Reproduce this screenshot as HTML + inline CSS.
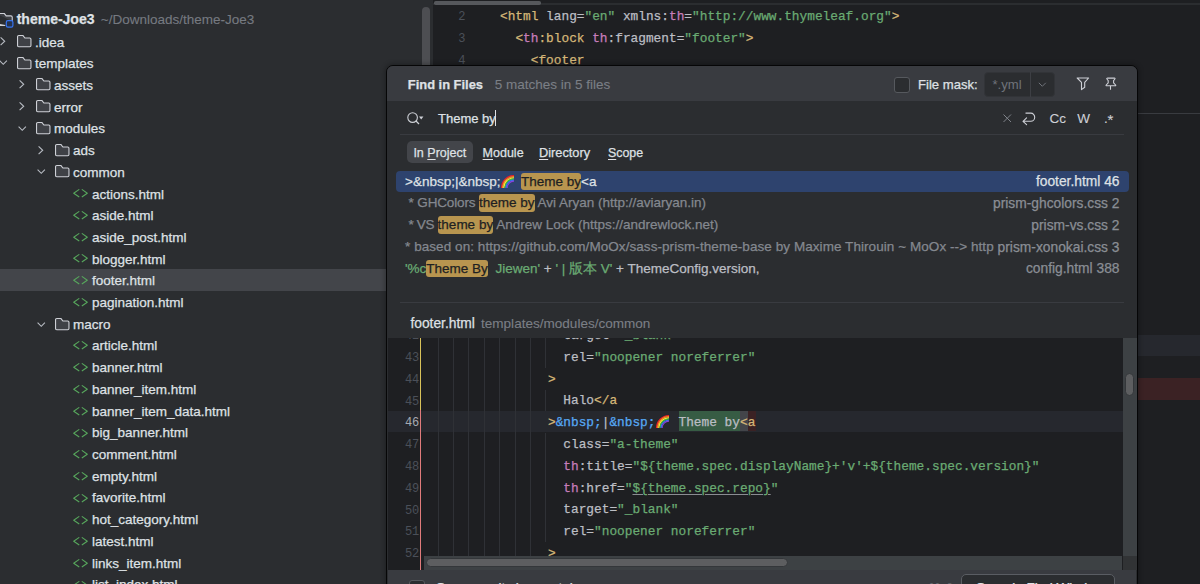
<!DOCTYPE html><html><head><meta charset="utf-8"><style>
*{margin:0;padding:0;box-sizing:border-box}
html,body{width:1200px;height:584px;overflow:hidden;background:#2b2d30}
body{position:relative;font-family:"Liberation Sans",sans-serif;color:#dfe1e5;font-size:13.5px}
.abs{position:absolute;white-space:pre}
.t{position:absolute;white-space:pre;line-height:22px;height:22px;-webkit-text-stroke:0.25px currentColor}
.tag{color:#d5b778}.attr{color:#bcbec4}.val{color:#6aab73}.ns{color:#c77dbb}.ent{color:#56a8f5}.txt{color:#bcbec4}
.ln{color:#4b5059;-webkit-text-stroke:0}
.hl{display:inline-block;height:17.6px;line-height:17.6px;background:#b8954f;color:#1e1f22;border-radius:3px}
svg{position:absolute;overflow:visible}
u{text-decoration:underline;text-underline-offset:1.5px;text-decoration-thickness:1px}
.val u{text-decoration-color:#8a8d92}
</style></head><body>
<div class="abs" style="left:0.00px;top:0.00px;width:433.00px;height:584.00px;background:#2b2d30;"></div>
<div class="abs" style="left:0.00px;top:269.12px;width:433.00px;height:22.00px;background:#43454a;"></div>
<div class="abs" style="left:422.00px;top:7.00px;width:8.00px;height:80.00px;background:#4d4e52;border-radius:4px"></div>
<svg style="left:0;top:13px" width="14" height="16" viewBox="0 0 14 16"><path d="M-1.5 1.9 Q-1.5 0.55 -0.2 0.55 H4.4 L6.2 2.9 H10.9 Q12.25 2.9 12.25 4.25 V8.2 M5.2 12.5 H-0.2 Q-1.5 12.5 -1.5 11.2 Z" fill="#3d3f44" stroke="#ced0d6" stroke-width="1.1"/><rect x="6.3" y="7.6" width="6.6" height="6.6" rx="1.6" fill="#25324d" stroke="#3574f0" stroke-width="1.2"/></svg>
<div class="t " style="left:16.70px;top:7.75px;font-size:14px;font-family:'Liberation Sans',sans-serif;font-weight:bold;color:#dfe1e5">theme-Joe3</div>
<div class="t " style="left:100.80px;top:8.82px;font-size:13.5px;font-family:'Liberation Sans',sans-serif;color:#767a81;-webkit-text-stroke:0.1px #767a81">~/Downloads/theme-Joe3</div>
<svg style="left:0.45px;top:36.85px" width="6" height="9" viewBox="0 0 6 9"><path d="M0.6 0.3 L4.7 4.25 L0.6 8.2" fill="none" stroke="#b8bcc3" stroke-width="1.1"/></svg>
<svg style="left:16.70px;top:34.80px" width="15" height="13" viewBox="0 0 15 13"><path d="M0.55 1.8 Q0.55 0.55 1.8 0.55 H6.0 L7.9 3.0 H12.7 Q13.95 3.0 13.95 4.25 V10.45 Q13.95 11.7 12.7 11.7 H1.8 Q0.55 11.7 0.55 10.45 Z" fill="#3f4146" stroke="#ced0d6" stroke-width="1.1"/></svg>
<div class="t " style="left:34.90px;top:31.57px;font-size:13.5px;font-family:'Liberation Sans',sans-serif;">.idea</div>
<svg style="left:-1.30px;top:60.38px" width="9" height="6" viewBox="0 0 9 6"><path d="M0.6 0.6 L4.25 4.3 L7.9 0.6" fill="none" stroke="#b8bcc3" stroke-width="1.1"/></svg>
<svg style="left:16.70px;top:56.58px" width="15" height="13" viewBox="0 0 15 13"><path d="M0.55 1.8 Q0.55 0.55 1.8 0.55 H6.0 L7.9 3.0 H12.7 Q13.95 3.0 13.95 4.25 V10.45 Q13.95 11.7 12.7 11.7 H1.8 Q0.55 11.7 0.55 10.45 Z" fill="#3f4146" stroke="#ced0d6" stroke-width="1.1"/></svg>
<div class="t " style="left:34.90px;top:53.28px;font-size:13.5px;font-family:'Liberation Sans',sans-serif;">templates</div>
<svg style="left:19.45px;top:80.40px" width="6" height="9" viewBox="0 0 6 9"><path d="M0.6 0.3 L4.7 4.25 L0.6 8.2" fill="none" stroke="#b8bcc3" stroke-width="1.1"/></svg>
<svg style="left:35.70px;top:78.35px" width="15" height="13" viewBox="0 0 15 13"><path d="M0.55 1.8 Q0.55 0.55 1.8 0.55 H6.0 L7.9 3.0 H12.7 Q13.95 3.0 13.95 4.25 V10.45 Q13.95 11.7 12.7 11.7 H1.8 Q0.55 11.7 0.55 10.45 Z" fill="#3f4146" stroke="#ced0d6" stroke-width="1.1"/></svg>
<div class="t " style="left:53.90px;top:74.99px;font-size:13.5px;font-family:'Liberation Sans',sans-serif;">assets</div>
<svg style="left:19.45px;top:102.17px" width="6" height="9" viewBox="0 0 6 9"><path d="M0.6 0.3 L4.7 4.25 L0.6 8.2" fill="none" stroke="#b8bcc3" stroke-width="1.1"/></svg>
<svg style="left:35.70px;top:100.12px" width="15" height="13" viewBox="0 0 15 13"><path d="M0.55 1.8 Q0.55 0.55 1.8 0.55 H6.0 L7.9 3.0 H12.7 Q13.95 3.0 13.95 4.25 V10.45 Q13.95 11.7 12.7 11.7 H1.8 Q0.55 11.7 0.55 10.45 Z" fill="#3f4146" stroke="#ced0d6" stroke-width="1.1"/></svg>
<div class="t " style="left:53.90px;top:96.69px;font-size:13.5px;font-family:'Liberation Sans',sans-serif;">error</div>
<svg style="left:17.70px;top:125.70px" width="9" height="6" viewBox="0 0 9 6"><path d="M0.6 0.6 L4.25 4.3 L7.9 0.6" fill="none" stroke="#b8bcc3" stroke-width="1.1"/></svg>
<svg style="left:35.70px;top:121.90px" width="15" height="13" viewBox="0 0 15 13"><path d="M0.55 1.8 Q0.55 0.55 1.8 0.55 H6.0 L7.9 3.0 H12.7 Q13.95 3.0 13.95 4.25 V10.45 Q13.95 11.7 12.7 11.7 H1.8 Q0.55 11.7 0.55 10.45 Z" fill="#3f4146" stroke="#ced0d6" stroke-width="1.1"/></svg>
<div class="t " style="left:53.90px;top:118.40px;font-size:13.5px;font-family:'Liberation Sans',sans-serif;">modules</div>
<svg style="left:38.45px;top:145.72px" width="6" height="9" viewBox="0 0 6 9"><path d="M0.6 0.3 L4.7 4.25 L0.6 8.2" fill="none" stroke="#b8bcc3" stroke-width="1.1"/></svg>
<svg style="left:54.70px;top:143.67px" width="15" height="13" viewBox="0 0 15 13"><path d="M0.55 1.8 Q0.55 0.55 1.8 0.55 H6.0 L7.9 3.0 H12.7 Q13.95 3.0 13.95 4.25 V10.45 Q13.95 11.7 12.7 11.7 H1.8 Q0.55 11.7 0.55 10.45 Z" fill="#3f4146" stroke="#ced0d6" stroke-width="1.1"/></svg>
<div class="t " style="left:72.90px;top:140.11px;font-size:13.5px;font-family:'Liberation Sans',sans-serif;">ads</div>
<svg style="left:36.70px;top:169.25px" width="9" height="6" viewBox="0 0 9 6"><path d="M0.6 0.6 L4.25 4.3 L7.9 0.6" fill="none" stroke="#b8bcc3" stroke-width="1.1"/></svg>
<svg style="left:54.70px;top:165.45px" width="15" height="13" viewBox="0 0 15 13"><path d="M0.55 1.8 Q0.55 0.55 1.8 0.55 H6.0 L7.9 3.0 H12.7 Q13.95 3.0 13.95 4.25 V10.45 Q13.95 11.7 12.7 11.7 H1.8 Q0.55 11.7 0.55 10.45 Z" fill="#3f4146" stroke="#ced0d6" stroke-width="1.1"/></svg>
<div class="t " style="left:72.90px;top:161.81px;font-size:13.5px;font-family:'Liberation Sans',sans-serif;">common</div>
<svg style="left:73.40px;top:189.02px" width="16" height="10" viewBox="0 0 16 10"><path d="M5.9 0.6 L0.7 4.2 L5.9 7.8 M9.2 0.6 L14.3 4.2 L9.2 7.8" fill="none" stroke="#57a65c" stroke-width="1.1" stroke-linecap="round" stroke-linejoin="round"/></svg>
<div class="t " style="left:91.90px;top:183.52px;font-size:13.5px;font-family:'Liberation Sans',sans-serif;">actions.html</div>
<svg style="left:73.40px;top:210.80px" width="16" height="10" viewBox="0 0 16 10"><path d="M5.9 0.6 L0.7 4.2 L5.9 7.8 M9.2 0.6 L14.3 4.2 L9.2 7.8" fill="none" stroke="#57a65c" stroke-width="1.1" stroke-linecap="round" stroke-linejoin="round"/></svg>
<div class="t " style="left:91.90px;top:205.23px;font-size:13.5px;font-family:'Liberation Sans',sans-serif;">aside.html</div>
<svg style="left:73.40px;top:232.57px" width="16" height="10" viewBox="0 0 16 10"><path d="M5.9 0.6 L0.7 4.2 L5.9 7.8 M9.2 0.6 L14.3 4.2 L9.2 7.8" fill="none" stroke="#57a65c" stroke-width="1.1" stroke-linecap="round" stroke-linejoin="round"/></svg>
<div class="t " style="left:91.90px;top:226.94px;font-size:13.5px;font-family:'Liberation Sans',sans-serif;">aside_post.html</div>
<svg style="left:73.40px;top:254.35px" width="16" height="10" viewBox="0 0 16 10"><path d="M5.9 0.6 L0.7 4.2 L5.9 7.8 M9.2 0.6 L14.3 4.2 L9.2 7.8" fill="none" stroke="#57a65c" stroke-width="1.1" stroke-linecap="round" stroke-linejoin="round"/></svg>
<div class="t " style="left:91.90px;top:248.64px;font-size:13.5px;font-family:'Liberation Sans',sans-serif;">blogger.html</div>
<svg style="left:73.40px;top:276.12px" width="16" height="10" viewBox="0 0 16 10"><path d="M5.9 0.6 L0.7 4.2 L5.9 7.8 M9.2 0.6 L14.3 4.2 L9.2 7.8" fill="none" stroke="#57a65c" stroke-width="1.1" stroke-linecap="round" stroke-linejoin="round"/></svg>
<div class="t " style="left:91.90px;top:270.35px;font-size:13.5px;font-family:'Liberation Sans',sans-serif;">footer.html</div>
<svg style="left:73.40px;top:297.90px" width="16" height="10" viewBox="0 0 16 10"><path d="M5.9 0.6 L0.7 4.2 L5.9 7.8 M9.2 0.6 L14.3 4.2 L9.2 7.8" fill="none" stroke="#57a65c" stroke-width="1.1" stroke-linecap="round" stroke-linejoin="round"/></svg>
<div class="t " style="left:91.90px;top:292.06px;font-size:13.5px;font-family:'Liberation Sans',sans-serif;">pagination.html</div>
<svg style="left:36.70px;top:321.68px" width="9" height="6" viewBox="0 0 9 6"><path d="M0.6 0.6 L4.25 4.3 L7.9 0.6" fill="none" stroke="#b8bcc3" stroke-width="1.1"/></svg>
<svg style="left:54.70px;top:317.88px" width="15" height="13" viewBox="0 0 15 13"><path d="M0.55 1.8 Q0.55 0.55 1.8 0.55 H6.0 L7.9 3.0 H12.7 Q13.95 3.0 13.95 4.25 V10.45 Q13.95 11.7 12.7 11.7 H1.8 Q0.55 11.7 0.55 10.45 Z" fill="#3f4146" stroke="#ced0d6" stroke-width="1.1"/></svg>
<div class="t " style="left:72.90px;top:313.76px;font-size:13.5px;font-family:'Liberation Sans',sans-serif;">macro</div>
<svg style="left:73.40px;top:341.45px" width="16" height="10" viewBox="0 0 16 10"><path d="M5.9 0.6 L0.7 4.2 L5.9 7.8 M9.2 0.6 L14.3 4.2 L9.2 7.8" fill="none" stroke="#57a65c" stroke-width="1.1" stroke-linecap="round" stroke-linejoin="round"/></svg>
<div class="t " style="left:91.90px;top:335.47px;font-size:13.5px;font-family:'Liberation Sans',sans-serif;">article.html</div>
<svg style="left:73.40px;top:363.23px" width="16" height="10" viewBox="0 0 16 10"><path d="M5.9 0.6 L0.7 4.2 L5.9 7.8 M9.2 0.6 L14.3 4.2 L9.2 7.8" fill="none" stroke="#57a65c" stroke-width="1.1" stroke-linecap="round" stroke-linejoin="round"/></svg>
<div class="t " style="left:91.90px;top:357.18px;font-size:13.5px;font-family:'Liberation Sans',sans-serif;">banner.html</div>
<svg style="left:73.40px;top:385.00px" width="16" height="10" viewBox="0 0 16 10"><path d="M5.9 0.6 L0.7 4.2 L5.9 7.8 M9.2 0.6 L14.3 4.2 L9.2 7.8" fill="none" stroke="#57a65c" stroke-width="1.1" stroke-linecap="round" stroke-linejoin="round"/></svg>
<div class="t " style="left:91.90px;top:378.88px;font-size:13.5px;font-family:'Liberation Sans',sans-serif;">banner_item.html</div>
<svg style="left:73.40px;top:406.77px" width="16" height="10" viewBox="0 0 16 10"><path d="M5.9 0.6 L0.7 4.2 L5.9 7.8 M9.2 0.6 L14.3 4.2 L9.2 7.8" fill="none" stroke="#57a65c" stroke-width="1.1" stroke-linecap="round" stroke-linejoin="round"/></svg>
<div class="t " style="left:91.90px;top:400.59px;font-size:13.5px;font-family:'Liberation Sans',sans-serif;">banner_item_data.html</div>
<svg style="left:73.40px;top:428.55px" width="16" height="10" viewBox="0 0 16 10"><path d="M5.9 0.6 L0.7 4.2 L5.9 7.8 M9.2 0.6 L14.3 4.2 L9.2 7.8" fill="none" stroke="#57a65c" stroke-width="1.1" stroke-linecap="round" stroke-linejoin="round"/></svg>
<div class="t " style="left:91.90px;top:422.30px;font-size:13.5px;font-family:'Liberation Sans',sans-serif;">big_banner.html</div>
<svg style="left:73.40px;top:450.32px" width="16" height="10" viewBox="0 0 16 10"><path d="M5.9 0.6 L0.7 4.2 L5.9 7.8 M9.2 0.6 L14.3 4.2 L9.2 7.8" fill="none" stroke="#57a65c" stroke-width="1.1" stroke-linecap="round" stroke-linejoin="round"/></svg>
<div class="t " style="left:91.90px;top:444.01px;font-size:13.5px;font-family:'Liberation Sans',sans-serif;">comment.html</div>
<svg style="left:73.40px;top:472.10px" width="16" height="10" viewBox="0 0 16 10"><path d="M5.9 0.6 L0.7 4.2 L5.9 7.8 M9.2 0.6 L14.3 4.2 L9.2 7.8" fill="none" stroke="#57a65c" stroke-width="1.1" stroke-linecap="round" stroke-linejoin="round"/></svg>
<div class="t " style="left:91.90px;top:465.71px;font-size:13.5px;font-family:'Liberation Sans',sans-serif;">empty.html</div>
<svg style="left:73.40px;top:493.88px" width="16" height="10" viewBox="0 0 16 10"><path d="M5.9 0.6 L0.7 4.2 L5.9 7.8 M9.2 0.6 L14.3 4.2 L9.2 7.8" fill="none" stroke="#57a65c" stroke-width="1.1" stroke-linecap="round" stroke-linejoin="round"/></svg>
<div class="t " style="left:91.90px;top:487.42px;font-size:13.5px;font-family:'Liberation Sans',sans-serif;">favorite.html</div>
<svg style="left:73.40px;top:515.65px" width="16" height="10" viewBox="0 0 16 10"><path d="M5.9 0.6 L0.7 4.2 L5.9 7.8 M9.2 0.6 L14.3 4.2 L9.2 7.8" fill="none" stroke="#57a65c" stroke-width="1.1" stroke-linecap="round" stroke-linejoin="round"/></svg>
<div class="t " style="left:91.90px;top:509.13px;font-size:13.5px;font-family:'Liberation Sans',sans-serif;">hot_category.html</div>
<svg style="left:73.40px;top:537.42px" width="16" height="10" viewBox="0 0 16 10"><path d="M5.9 0.6 L0.7 4.2 L5.9 7.8 M9.2 0.6 L14.3 4.2 L9.2 7.8" fill="none" stroke="#57a65c" stroke-width="1.1" stroke-linecap="round" stroke-linejoin="round"/></svg>
<div class="t " style="left:91.90px;top:530.83px;font-size:13.5px;font-family:'Liberation Sans',sans-serif;">latest.html</div>
<svg style="left:73.40px;top:559.20px" width="16" height="10" viewBox="0 0 16 10"><path d="M5.9 0.6 L0.7 4.2 L5.9 7.8 M9.2 0.6 L14.3 4.2 L9.2 7.8" fill="none" stroke="#57a65c" stroke-width="1.1" stroke-linecap="round" stroke-linejoin="round"/></svg>
<div class="t " style="left:91.90px;top:552.54px;font-size:13.5px;font-family:'Liberation Sans',sans-serif;">links_item.html</div>
<svg style="left:73.40px;top:580.98px" width="16" height="10" viewBox="0 0 16 10"><path d="M5.9 0.6 L0.7 4.2 L5.9 7.8 M9.2 0.6 L14.3 4.2 L9.2 7.8" fill="none" stroke="#57a65c" stroke-width="1.1" stroke-linecap="round" stroke-linejoin="round"/></svg>
<div class="t " style="left:91.90px;top:574.25px;font-size:13.5px;font-family:'Liberation Sans',sans-serif;">list_index.html</div>
<div class="abs" style="left:433.00px;top:0.00px;width:767.00px;height:584.00px;background:#1e1f22;"></div>
<div class="abs" style="left:433.00px;top:3.00px;width:767.00px;height:1.50px;background:#2b2d30;"></div>
<div class="abs" style="left:434.00px;top:1.00px;width:107.00px;height:3.50px;background:#56585c;border-radius:1.75px"></div>
<div class="abs" style="left:1137.00px;top:113.00px;width:63.00px;height:1.00px;background:#393b40;"></div>
<div class="abs" style="left:1137.00px;top:335.00px;width:63.00px;height:21.00px;background:#26282e;"></div>
<div class="abs" style="left:1137.00px;top:378.00px;width:63.00px;height:22.00px;background:#3b2224;"></div>
<div class="t " style="left:500.00px;top:6.19px;font-size:12.8px;font-family:'Liberation Mono',monospace;"><span class="tag">&lt;html</span> <span class="attr">lang=</span><span class="val">"en"</span> <span class="attr">xmlns:</span><span class="ns">th</span><span class="attr">=</span><span class="val">&quot;http://www.thymeleaf.org&quot;</span><span class="tag">&gt;</span></div>
<div class="t ln" style="left:420.00px;top:6.40px;font-size:12px;font-family:'Liberation Mono',monospace;width:45.5px;text-align:right">2</div>
<div class="t " style="left:515.38px;top:27.96px;font-size:12.8px;font-family:'Liberation Mono',monospace;"><span class="tag">&lt;</span><span class="ns">th</span><span class="tag">:block</span> <span class="ns">th</span><span class="attr">:fragment=</span><span class="val">"footer"</span><span class="tag">&gt;</span></div>
<div class="t ln" style="left:420.00px;top:28.18px;font-size:12px;font-family:'Liberation Mono',monospace;width:45.5px;text-align:right">3</div>
<div class="t " style="left:530.76px;top:49.74px;font-size:12.8px;font-family:'Liberation Mono',monospace;"><span class="tag">&lt;footer</span></div>
<div class="t ln" style="left:420.00px;top:49.95px;font-size:12px;font-family:'Liberation Mono',monospace;width:45.5px;text-align:right">4</div>
<!--DIALOG-->
<div class="abs" style="left:386px;top:65px;width:751.5px;height:540px;background:#2b2d30;border:1px solid #060607;border-radius:7px 7px 0 0;box-shadow:0 0 5px 1px rgba(0,0,0,0.3)"></div>
<div class="abs" style="left:387px;top:66px;width:749.5px;height:35.00px;background:#393b40;border-radius:6px 6px 0 0"></div>
<div class="t " style="left:407.80px;top:73.73px;font-size:12.9px;font-family:'Liberation Sans',sans-serif;font-weight:bold;color:#dfe1e5">Find in Files</div>
<div class="t " style="left:494.80px;top:74.12px;font-size:13.5px;font-family:'Liberation Sans',sans-serif;color:#7b7f86;-webkit-text-stroke:0.1px #7b7f86">5 matches in 5 files</div>
<div class="abs" style="left:894.00px;top:77.00px;width:15.50px;height:15.50px;background:#2b2d30;border:1px solid #56595e;border-radius:3px"></div>
<div class="t " style="left:918.00px;top:73.66px;font-size:13.1px;font-family:'Liberation Sans',sans-serif;color:#dfe1e5">File mask:</div>
<div class="abs" style="left:983.75px;top:71.60px;width:71.50px;height:25.40px;background:#2b2d30;border:1px solid #323438;border-radius:4px"></div>
<div class="abs" style="left:1029.50px;top:72.00px;width:1.00px;height:24.50px;background:#3d3f44;"></div>
<div class="t " style="left:992.50px;top:73.66px;font-size:13.1px;font-family:'Liberation Sans',sans-serif;color:#6f737a;-webkit-text-stroke:0">*.yml</div>
<svg style="left:1038px;top:82px" width="9" height="6" viewBox="0 0 9 6"><path d="M0.8 0.8 L4.3 4.3 L7.8 0.8" fill="none" stroke="#6f737a" stroke-width="1"/></svg>
<svg style="left:1076px;top:77px" width="14" height="14" viewBox="0 0 14 14"><path d="M1.2 1 H12.6 L8.7 5.4 V10.3 L5.5 12.6 V5.4 Z" fill="none" stroke="#ced0d6" stroke-width="1.1" stroke-linejoin="round"/></svg>
<svg style="left:1104px;top:77px" width="14" height="14" viewBox="0 0 14 14"><path d="M3.6 1.1 H10.4 Q11.3 1.1 10.9 2 L9.6 3.6 V5.8 L11.6 8 Q12.1 8.8 11.2 8.8 H2.6 Q1.7 8.8 2.2 8 L4.2 5.8 V3.6 L2.9 2 Q2.5 1.1 3.6 1.1 Z M6.5 8.8 V12.8" fill="none" stroke="#ced0d6" stroke-width="1.1" stroke-linejoin="round"/></svg>
<svg style="left:407px;top:112px" width="18" height="14" viewBox="0 0 18 14"><circle cx="5.6" cy="5.6" r="4.8" fill="none" stroke="#ced0d6" stroke-width="1.1"/><path d="M9 9 L12 12" stroke="#ced0d6" stroke-width="1.2"/><path d="M12 4.5 H16.4 L14.2 7.4 Z" fill="#ced0d6"/></svg>
<div class="t " style="left:438.00px;top:107.70px;font-size:13px;font-family:'Liberation Sans',sans-serif;color:#dfe1e5">Theme by</div>
<div class="abs" style="left:495.30px;top:110.00px;width:1.00px;height:16.00px;background:#dfe1e5;"></div>
<svg style="left:1002.5px;top:114px" width="9" height="9" viewBox="0 0 9 9"><path d="M0.5 0.5 L8 8 M8 0.5 L0.5 8" stroke="#7f838a" stroke-width="1"/></svg>
<svg style="left:1022px;top:112px" width="15" height="14" viewBox="0 0 15 14"><path d="M3.9 1.1 H8.8 A3.9 4.1 0 0 1 8.8 9.3 H1.2 M4.6 5.8 L1 9.3 L4.6 12.6" fill="none" stroke="#ced0d6" stroke-width="1.1" stroke-linejoin="round" stroke-linecap="round"/></svg>
<div class="t " style="left:1049.50px;top:108.12px;font-size:13.5px;font-family:'Liberation Sans',sans-serif;color:#ced0d6;-webkit-text-stroke:0.1px #ced0d6">Cc</div>
<div class="t " style="left:1077.30px;top:108.12px;font-size:13.5px;font-family:'Liberation Sans',sans-serif;color:#ced0d6;-webkit-text-stroke:0.1px #ced0d6">W</div>
<div class="t " style="left:1104.00px;top:108.12px;font-size:13.5px;font-family:'Liberation Sans',sans-serif;color:#ced0d6;-webkit-text-stroke:0.1px #ced0d6">.</div>
<div class="t " style="left:1107.50px;top:109.10px;font-size:15px;font-family:'Liberation Sans',sans-serif;color:#ced0d6;-webkit-text-stroke:0.1px #ced0d6">*</div>
<div class="abs" style="left:399.60px;top:134.00px;width:724.40px;height:1.00px;background:#393b40;"></div>
<div class="abs" style="left:407.00px;top:141.00px;width:65.60px;height:22.40px;background:#43454a;border-radius:5px"></div>
<div class="t " style="left:413.40px;top:141.67px;font-size:12.5px;font-family:'Liberation Sans',sans-serif;color:#dfe1e5">In <u>P</u>roject</div>
<div class="t " style="left:482.60px;top:141.67px;font-size:12.5px;font-family:'Liberation Sans',sans-serif;color:#dfe1e5"><u>M</u>odule</div>
<div class="t " style="left:539.00px;top:141.58px;font-size:12.75px;font-family:'Liberation Sans',sans-serif;color:#dfe1e5"><u>D</u>irectory</div>
<div class="t " style="left:608.00px;top:141.70px;font-size:12.4px;font-family:'Liberation Sans',sans-serif;color:#dfe1e5"><u>S</u>cope</div>
<div class="abs" style="left:396.00px;top:170.60px;width:732.50px;height:21.00px;background:#2e436e;border-radius:4px"></div>
<div class="t " style="left:405.00px;top:170.72px;font-size:13.5px;font-family:'Liberation Sans',sans-serif;"><span style="color:#dfe1e5">&gt;&amp;nbsp;|&amp;nbsp;</span></div>
<svg style="left:500.40px;top:174.00px" width="15" height="15" viewBox="0 0 15 15"><path d="M1.55 14 A12.45 12.45 0 0 1 14 1.55" fill="none" stroke="#f0202a" stroke-width="1.2"/><path d="M2.67 14 A11.33 11.33 0 0 1 14 2.67" fill="none" stroke="#ff8a1f" stroke-width="1.2"/><path d="M3.79 14 A10.21 10.21 0 0 1 14 3.79" fill="none" stroke="#ffe23a" stroke-width="1.2"/><path d="M4.91 14 A9.09 9.09 0 0 1 14 4.91" fill="none" stroke="#3ec43a" stroke-width="1.2"/><path d="M6.03 14 A7.97 7.97 0 0 1 14 6.03" fill="none" stroke="#2f7cf0" stroke-width="1.2"/><path d="M7.15 14 A6.85 6.85 0 0 1 14 7.15" fill="none" stroke="#8a3fd8" stroke-width="1.2"/></svg>
<div class="t " style="left:521.00px;top:170.72px;font-size:13.5px;font-family:'Liberation Sans',sans-serif;"><span class="hl">Theme by</span><span style="color:#dfe1e5">&lt;a</span></div>
<div class="t " style="left:919.50px;top:171.42px;font-size:13.8px;font-family:'Liberation Sans',sans-serif;width:200px;text-align:right;color:#dfe1e5">footer.html 46</div>
<div class="t " style="left:405.00px;top:192.47px;font-size:13.5px;font-family:'Liberation Sans',sans-serif;color:#84888f"><span style="letter-spacing:-0.15px"> * GHColors </span><span class="hl">theme by</span> Avi Aryan (http://aviaryan.in)</div>
<div class="t " style="left:919.50px;top:193.17px;font-size:13.8px;font-family:'Liberation Sans',sans-serif;width:200px;text-align:right;color:#8a8e95">prism-ghcolors.css 2</div>
<div class="t " style="left:405.00px;top:214.22px;font-size:13.5px;font-family:'Liberation Sans',sans-serif;color:#84888f"><span style="letter-spacing:-0.32px"> * VS </span><span class="hl">theme by</span> Andrew Lock (https://andrewlock.net)</div>
<div class="t " style="left:919.50px;top:214.92px;font-size:13.8px;font-family:'Liberation Sans',sans-serif;width:200px;text-align:right;color:#8a8e95">prism-vs.css 2</div>
<div class="t " style="left:405.00px;top:235.97px;font-size:13.5px;font-family:'Liberation Sans',sans-serif;color:#84888f;letter-spacing:0.065px">* based on: https://github.com/MoOx/sass-prism-theme-base by Maxime Thirouin ~ MoOx --&gt; http</div>
<div class="t " style="left:919.50px;top:236.67px;font-size:13.8px;font-family:'Liberation Sans',sans-serif;width:200px;text-align:right;color:#8a8e95">prism-xonokai.css 3</div>
<div class="t " style="left:405.00px;top:257.72px;font-size:13.5px;font-family:'Liberation Sans',sans-serif;"><span style='color:#6aab73'>'%c</span><span class="hl">Theme By</span><span style='color:#6aab73'>  Jiewen'</span><span style='color:#bcbec4'> + </span><span style='color:#6aab73'>' | 版本 V'</span><span style='color:#bcbec4'> + ThemeConfig.version,</span></div>
<div class="t " style="left:919.50px;top:258.42px;font-size:13.8px;font-family:'Liberation Sans',sans-serif;width:200px;text-align:right;color:#8a8e95">config.html 388</div>
<div class="abs" style="left:399.60px;top:302.00px;width:724.40px;height:1.00px;background:#393b40;"></div>
<div class="t " style="left:410.40px;top:312.52px;font-size:13.8px;font-family:'Liberation Sans',sans-serif;color:#dfe1e5">footer.html</div>
<div class="t " style="left:481.00px;top:312.60px;font-size:13.55px;font-family:'Liberation Sans',sans-serif;color:#7b7f86;-webkit-text-stroke:0.1px #7b7f86">templates/modules/common</div>
<div class="abs" style="left:388.00px;top:338.00px;width:734.50px;height:232.00px;background:#1e1f22;"></div>
<div class="abs" style="left:388.00px;top:411.00px;width:734.50px;height:20.50px;background:#26282e;"></div>
<div class="abs" style="left:420.00px;top:338.00px;width:1.30px;height:72.00px;background:#d9c25a;"></div>
<div class="abs" style="left:420.00px;top:410.00px;width:1.30px;height:160.00px;background:#e07b7b;"></div>
<div class="abs" style="left:437.60px;top:338.00px;width:1.00px;height:232.00px;background:#2f3136;"></div>
<div class="abs" style="left:452.98px;top:338.00px;width:1.00px;height:232.00px;background:#2f3136;"></div>
<div class="abs" style="left:468.36px;top:338.00px;width:1.00px;height:232.00px;background:#2f3136;"></div>
<div class="abs" style="left:483.74px;top:338.00px;width:1.00px;height:232.00px;background:#2f3136;"></div>
<div class="abs" style="left:499.12px;top:338.00px;width:1.00px;height:232.00px;background:#2f3136;"></div>
<div class="abs" style="left:514.50px;top:338.00px;width:1.00px;height:232.00px;background:#2f3136;"></div>
<div class="abs" style="left:529.88px;top:338.00px;width:1.00px;height:232.00px;background:#2f3136;"></div>
<div class="abs" style="left:545.26px;top:338.00px;width:1.00px;height:29.70px;background:#2f3136;"></div>
<div class="abs" style="left:545.26px;top:389.50px;width:1.00px;height:21.70px;background:#2f3136;"></div>
<div class="abs" style="left:545.26px;top:433.00px;width:1.00px;height:108.90px;background:#2f3136;"></div>
<div class="t " style="left:563.33px;top:325.11px;font-size:12.8px;font-family:'Liberation Mono',monospace;"><span class="attr">target=</span><span class="val">"_blank"</span></div>
<div class="t ln" style="left:374.00px;top:325.33px;font-size:12px;font-family:'Liberation Mono',monospace;width:45.3px;text-align:right">42</div>
<div class="t " style="left:563.33px;top:346.89px;font-size:12.8px;font-family:'Liberation Mono',monospace;"><span class="attr">rel=</span><span class="val">"noopener noreferrer"</span></div>
<div class="t ln" style="left:374.00px;top:347.10px;font-size:12px;font-family:'Liberation Mono',monospace;width:45.3px;text-align:right">43</div>
<div class="t " style="left:547.95px;top:368.66px;font-size:12.8px;font-family:'Liberation Mono',monospace;"><span class="tag">&gt;</span></div>
<div class="t ln" style="left:374.00px;top:368.88px;font-size:12px;font-family:'Liberation Mono',monospace;width:45.3px;text-align:right">44</div>
<div class="t " style="left:563.33px;top:390.44px;font-size:12.8px;font-family:'Liberation Mono',monospace;"><span class="txt">Halo</span><span class="tag">&lt;/a</span></div>
<div class="t ln" style="left:374.00px;top:390.65px;font-size:12px;font-family:'Liberation Mono',monospace;width:45.3px;text-align:right">45</div>
<div class="abs" style="left:678.68px;top:411.40px;width:61.52px;height:19.90px;background:#375c44;"></div>
<div class="abs" style="left:740.20px;top:411.40px;width:7.69px;height:19.90px;background:#43454a;"></div>
<div class="abs" style="left:747.89px;top:411.40px;width:7.69px;height:19.90px;background:#3b2224;"></div>
<div class="t " style="left:547.95px;top:412.21px;font-size:12.8px;font-family:'Liberation Mono',monospace;"><span class="tag">&gt;</span><span class="ent">&amp;nbsp;</span><span class="txt">|</span><span class="ent">&amp;nbsp;</span>   <span class="txt">Theme by</span><span class="tag">&lt;</span><span class="tag">a</span></div>
<div class="t ln" style="left:374.00px;top:412.43px;font-size:12px;font-family:'Liberation Mono',monospace;width:45.3px;text-align:right;color:#a8abb2">46</div>
<svg style="left:655.11px;top:413.60px" width="15" height="15" viewBox="0 0 15 15"><path d="M1.55 14 A12.45 12.45 0 0 1 14 1.55" fill="none" stroke="#f0202a" stroke-width="1.2"/><path d="M2.67 14 A11.33 11.33 0 0 1 14 2.67" fill="none" stroke="#ff8a1f" stroke-width="1.2"/><path d="M3.79 14 A10.21 10.21 0 0 1 14 3.79" fill="none" stroke="#ffe23a" stroke-width="1.2"/><path d="M4.91 14 A9.09 9.09 0 0 1 14 4.91" fill="none" stroke="#3ec43a" stroke-width="1.2"/><path d="M6.03 14 A7.97 7.97 0 0 1 14 6.03" fill="none" stroke="#2f7cf0" stroke-width="1.2"/><path d="M7.15 14 A6.85 6.85 0 0 1 14 7.15" fill="none" stroke="#8a3fd8" stroke-width="1.2"/></svg>
<div class="t " style="left:563.33px;top:433.99px;font-size:12.8px;font-family:'Liberation Mono',monospace;"><span class="attr">class=</span><span class="val">"a-theme"</span></div>
<div class="t ln" style="left:374.00px;top:434.20px;font-size:12px;font-family:'Liberation Mono',monospace;width:45.3px;text-align:right">47</div>
<div class="t " style="left:563.33px;top:455.76px;font-size:12.8px;font-family:'Liberation Mono',monospace;"><span class="ns">th</span><span class="attr">:title=</span><span class="val">"${theme.spec.displayName}+'v'+${theme.spec.version}"</span></div>
<div class="t ln" style="left:374.00px;top:455.98px;font-size:12px;font-family:'Liberation Mono',monospace;width:45.3px;text-align:right">48</div>
<div class="t " style="left:563.33px;top:477.54px;font-size:12.8px;font-family:'Liberation Mono',monospace;"><span class="ns">th</span><span class="attr">:href=</span><span class="val">"<u>${theme.spec.repo}</u>"</span></div>
<div class="t ln" style="left:374.00px;top:477.75px;font-size:12px;font-family:'Liberation Mono',monospace;width:45.3px;text-align:right">49</div>
<div class="t " style="left:563.33px;top:499.31px;font-size:12.8px;font-family:'Liberation Mono',monospace;"><span class="attr">target=</span><span class="val">"_blank"</span></div>
<div class="t ln" style="left:374.00px;top:499.53px;font-size:12px;font-family:'Liberation Mono',monospace;width:45.3px;text-align:right">50</div>
<div class="t " style="left:563.33px;top:521.09px;font-size:12.8px;font-family:'Liberation Mono',monospace;"><span class="attr">rel=</span><span class="val">"noopener noreferrer"</span></div>
<div class="t ln" style="left:374.00px;top:521.30px;font-size:12px;font-family:'Liberation Mono',monospace;width:45.3px;text-align:right">51</div>
<div class="t " style="left:547.95px;top:542.86px;font-size:12.8px;font-family:'Liberation Mono',monospace;"><span class="tag">&gt;</span></div>
<div class="t ln" style="left:374.00px;top:543.08px;font-size:12px;font-family:'Liberation Mono',monospace;width:45.3px;text-align:right">52</div>
<div class="abs" style="left:388.00px;top:303.00px;width:734.50px;height:35.00px;background:#2b2d30;"></div>
<div class="t " style="left:410.40px;top:312.52px;font-size:13.8px;font-family:'Liberation Sans',sans-serif;color:#dfe1e5">footer.html</div>
<div class="t " style="left:481.00px;top:312.60px;font-size:13.55px;font-family:'Liberation Sans',sans-serif;color:#7b7f86;-webkit-text-stroke:0.1px #7b7f86">templates/modules/common</div>
<div class="abs" style="left:1122.50px;top:337.60px;width:14.00px;height:218.40px;background:#3d4144;"></div>
<div class="abs" style="left:1124.60px;top:373.20px;width:9.20px;height:23.10px;background:#5d5e60;border-radius:4.6px;border:1px solid #34373a"></div>
<div class="abs" style="left:424.20px;top:556.00px;width:698.30px;height:14.00px;background:#3d4144;"></div>
<div class="abs" style="left:426.30px;top:558.20px;width:361.50px;height:9.30px;background:#5d5e60;border-radius:4.65px;border:1px solid #34373a"></div>
<div class="abs" style="left:1122.50px;top:556.00px;width:14.00px;height:14.00px;background:#313335;"></div>
<div class="abs" style="left:388.00px;top:570.00px;width:748.00px;height:14.00px;background:#393b40;"></div>
<div class="abs" style="left:409.00px;top:580.00px;width:16.00px;height:16.00px;background:#2b2d30;border:1px solid #56595e;border-radius:3px"></div>
<div class="t " style="left:435.50px;top:577.32px;font-size:13.5px;font-family:'Liberation Sans',sans-serif;color:#dfe1e5">Open results in new tab</div>
<div class="t " style="left:928.00px;top:577.50px;font-size:13px;font-family:'Liberation Sans',sans-serif;color:#6f737a">⌘⏎</div>
<div class="abs" style="left:961.25px;top:574.25px;width:154.00px;height:26.00px;background:#2b2d30;border:1px solid #5a5d63;border-radius:5px"></div>
<div class="t " style="left:975.50px;top:577.32px;font-size:13.5px;font-family:'Liberation Sans',sans-serif;color:#dfe1e5">Open in Find Window</div>
</body></html>
